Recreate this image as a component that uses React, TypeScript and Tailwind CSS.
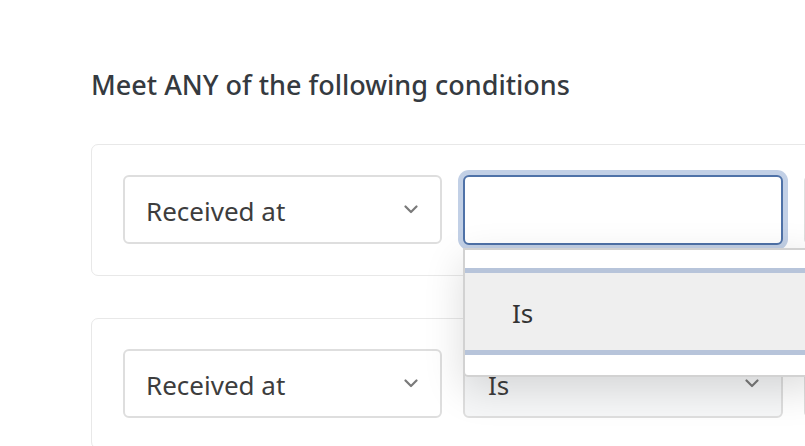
import React from 'react';

const Chevron: React.FC = () => (
  <svg width="14" height="9" viewBox="0 0 14 9" fill="none" className="shrink-0">
    <path d="M1.5 1.5 L7 7 L12.5 1.5" stroke="#7a7a7a" strokeWidth="2.2" strokeLinecap="round" strokeLinejoin="round" />
  </svg>
);

interface SelectBoxProps {
  value?: string;
}

const SelectBox: React.FC<SelectBoxProps> = ({ value }) => (
  <div className="flex h-[69px] w-[319px] shrink-0 items-center justify-between rounded-[6px] border-2 border-[#dedede] bg-white pl-[21px] pr-[22px]">
    <span className="pt-[3px] text-[26px] text-[#3d3d3d]">{value}</span>
    <Chevron />
  </div>
);

export default function App() {
  return (
    <div className="min-h-screen overflow-hidden bg-white pl-[91px] pt-[67px]" style={{ fontFamily: '"Noto Sans", "Open Sans", sans-serif' }}>
      <h2 className="text-[27px] font-medium leading-[35px] text-[#353a40]">Meet ANY of the following conditions</h2>

      <div className="mt-[42px] flex flex-col gap-[42px]">
        <div className="w-[800px] rounded-[7px] border border-[#e8e8e8] px-[31px] py-[30px]">
          <div className="flex gap-[21px]">
            <SelectBox value="Received at" />
            <div className="relative w-[320px] shrink-0">
              <div className="h-[70px] rounded-[6px] border-2 border-[#4f72a8] bg-white shadow-[0_0_0_5px_#c2d0e6]" />
              <div className="absolute left-0 top-[73px] z-10 h-[129px] w-[360px] overflow-hidden rounded-b-[5px] border-2 border-[#d2d2d2] bg-white shadow-[0_12px_40px_rgba(0,0,0,0.14)]">
                <div className="mt-[18px] flex h-[87px] items-center border-y-[5px] border-[#b7c4da] bg-[#efefef] pl-[47px]">
                  <span className="pt-[3px] text-[26px] text-[#333]">Is</span>
                </div>
              </div>
            </div>
            <div className="h-[70px] w-[320px] shrink-0 rounded-[6px] border-2 border-[#dedede]" />
          </div>
        </div>

        <div className="w-[800px] rounded-[7px] border border-[#e8e8e8] px-[31px] py-[30px]">
          <div className="flex gap-[21px]">
            <SelectBox value="Received at" />
            <div className="flex h-[69px] w-[320px] shrink-0 items-center justify-between rounded-[6px] border-2 border-[#dedede] bg-[#f6f7f8] pl-[23px] pr-[22px]">
              <span className="pt-[3px] text-[26px] text-[#3d3d3d]">Is</span>
              <Chevron />
            </div>
            <div className="h-[69px] w-[320px] shrink-0 rounded-[6px] border-2 border-[#dedede]" />
          </div>
        </div>
      </div>
    </div>
  );
}
